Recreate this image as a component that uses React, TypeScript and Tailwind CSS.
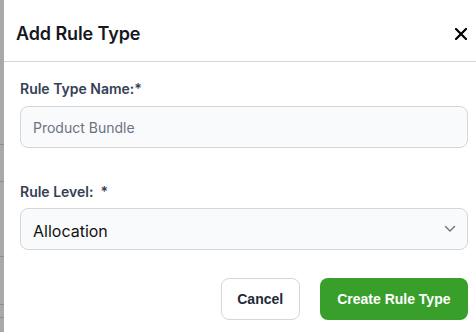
import React from 'react';

const stripRows = [145, 37, 75, 48, 13];

const AddRuleTypeModal: React.FC = () => {
  return (
    <div className="flex w-[476px] h-[332px] overflow-hidden bg-white font-['Inter',sans-serif]">
      {/* page behind the dialog */}
      <div className="w-[4px] shrink-0 bg-[#a9a9a9] flex flex-col">
        {stripRows.map((h, i) => (
          <div
            key={i}
            className="shrink-0 border-b border-[#8d8d8d]"
            style={{ height: h }}
          />
        ))}
      </div>

      <div className="flex-1 flex flex-col bg-white">
        <div className="h-[62px] shrink-0 flex items-center justify-between pl-3 pr-[9px] pt-[6px] border-b border-[#d4d6da]">
          <h2 className="text-[18px] font-semibold text-[#15181e] tracking-[-0.1px]">
            Add Rule Type
          </h2>
          <button className="w-3 h-3 flex items-center justify-center text-black">
            <svg viewBox="0 0 12 12" className="w-3 h-3" fill="none">
              <path
                d="M1 1L11 11M11 1L1 11"
                stroke="currentColor"
                strokeWidth="2.2"
                strokeLinecap="square"
              />
            </svg>
          </button>
        </div>

        <div className="flex flex-col pl-4 pr-2 pt-[17px]">
          <label className="text-sm leading-5 font-semibold text-[#364153] mb-[7px]">
            Rule Type Name:*
          </label>
          <input
            placeholder="Product Bundle"
            className="h-[42px] w-full rounded-lg border border-[#d3d6db] bg-[#f9fafb] px-3 text-sm text-[#111827] placeholder:text-[#6b7280] outline-none"
          />

          <label className="mt-[34px] text-sm leading-5 font-semibold text-[#364153] mb-[6px] whitespace-pre">
            {'Rule Level:  *'}
          </label>
          <div className="h-[42px] w-full rounded-lg border border-[#d3d6db] bg-[#f9fafb] pl-3 pr-[11px] flex items-center justify-between">
            <span className="text-base text-[#111111] pt-[3px]">Allocation</span>
            <svg viewBox="0 0 12 8" className="w-3 h-2 text-[#6b7280]" fill="none">
              <path
                d="M1.5 1.5L6 6L10.5 1.5"
                stroke="currentColor"
                strokeWidth="1.4"
                strokeLinecap="round"
                strokeLinejoin="round"
              />
            </svg>
          </div>

          <div className="mt-[28px] flex justify-end gap-5 font-['Liberation_Sans',Arial,sans-serif]">
            <button className="h-[42px] px-[15.5px] rounded-lg border border-[#d3d6db] bg-white text-sm font-bold text-[#1f2937]">
              Cancel
            </button>
            <button className="h-[42px] px-[17.5px] rounded-lg bg-[#38a02a] text-sm font-bold text-white">
              Create Rule Type
            </button>
          </div>
        </div>
      </div>
    </div>
  );
};

export default function App() {
  return <AddRuleTypeModal />;
}
